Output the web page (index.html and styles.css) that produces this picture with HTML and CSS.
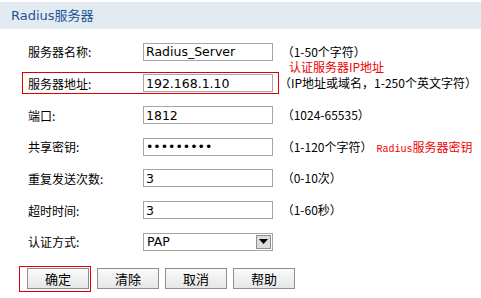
FILE: index.html
```html
<!DOCTYPE html>
<html lang="zh-CN">
<head>
    <meta charset="UTF-8">
    <title>Radius服务器</title>
    <link rel="stylesheet" href="styles.css">
</head>
<body>
<div class="panel-title">Radius服务器</div>

<div class="form">
    <div class="row first">
        <div class="field">
            <label>服务器名称:</label>
            <input type="text" value="Radius_Server">
        </div>
        <span class="hint">&nbsp;（1-50个字符）</span>
        <span class="note note-ip">认证服务器IP地址</span>
    </div>
    <div class="row">
        <div class="field mark">
            <label>服务器地址:</label>
            <input type="text" value="192.168.1.10">
        </div>
        <span class="hint">（IP地址或域名，1-250个英文字符）</span>
    </div>
    <div class="row">
        <div class="field">
            <label>端口:</label>
            <input type="text" value="1812">
        </div>
        <span class="hint">&nbsp;（1024-65535）</span>
    </div>
    <div class="row">
        <div class="field">
            <label>共享密钥:</label>
            <input type="password" value="123456789">
        </div>
        <span class="hint">&nbsp;（1-120个字符）</span>
        <span class="note note-key"><span class="mono">Radius</span>服务器密钥</span>
    </div>
    <div class="row">
        <div class="field">
            <label>重复发送次数:</label>
            <input type="text" value="3">
        </div>
        <span class="hint">&nbsp;（0-10次）</span>
    </div>
    <div class="row">
        <div class="field">
            <label>超时时间:</label>
            <input type="text" value="3">
        </div>
        <span class="hint">&nbsp;（1-60秒）</span>
    </div>
    <div class="row">
        <div class="field">
            <label>认证方式:</label>
            <div class="select">
                <span class="select-value">PAP</span>
                <span class="select-arrow">
                    <svg width="9" height="5" viewBox="0 0 9 5"><path d="M0 0h9L4.5 5z" fill="#000"/></svg>
                </span>
            </div>
        </div>
    </div>

    <div class="actions">
        <div class="btn-mark"><button>确定</button></div>
        <button>清除</button>
        <button>取消</button>
        <button>帮助</button>
    </div>
</div>
</body>
</html>
```

FILE: styles.css
```css
body {
    margin: 0;
    font-family: "DejaVu Sans", "Noto Sans CJK SC", sans-serif;
    font-size: 12px;
    color: #000;
    background: #fff;
}

.panel-title {
    margin-top: 2px;
    height: 27px;
    line-height: 27px;
    padding-left: 11px;
    background: #e3ebf2;
    color: #1d5494;
    font-size: 13px;
}

.form {
    padding-top: 7px;
}

.row {
    position: relative;
    display: flex;
    align-items: center;
    height: 31.67px;
}

.field {
    display: flex;
    align-items: center;
    margin-left: 22px;
    padding: 1px 5px;
    border: 1px solid transparent;
}

.field.mark {
    border-color: #e00000;
}

.field label {
    width: 115px;
    font-family: "Noto Sans CJK SC", sans-serif;
}

.field input {
    box-sizing: border-box;
    width: 130px;
    height: 18px;
    margin: 0;
    padding: 0 2px;
    border: 1px solid #a6a6a6;
    font-family: "DejaVu Sans", sans-serif;
    font-size: 12.5px;
    color: #000;
}

.hint {
    font-family: "Noto Sans CJK SC", sans-serif;
    line-height: 14px;
    white-space: nowrap;
}

.note {
    color: #f00000;
    font-family: "Noto Sans CJK SC", sans-serif;
    line-height: 14px;
    white-space: nowrap;
}

.note-ip {
    position: absolute;
    left: 289px;
    top: 24px;
}

.note-key {
    margin-left: 4px;
    padding-top: 4px;
}

.mono {
    font-family: "Liberation Mono", monospace;
    font-size: 10px;
}

.select {
    box-sizing: border-box;
    display: flex;
    align-items: center;
    width: 130px;
    height: 18px;
    border: 1px solid #a6a6a6;
    padding: 1px;
}

.select-value {
    flex: 1;
    padding-left: 2px;
    font-size: 12.5px;
}

.select-arrow {
    box-sizing: border-box;
    display: flex;
    align-items: center;
    justify-content: center;
    width: 15px;
    height: 14px;
    background: #dcdcdc;
    border: 1px solid #8f8f8f;
}

.actions {
    display: flex;
    align-items: center;
    gap: 6px;
    margin-top: 8px;
    margin-left: 19px;
}

.btn-mark {
    padding: 1px 1px 2px 7px;
    border: 1px solid #e00000;
}

button {
    box-sizing: border-box;
    width: 62px;
    height: 21px;
    margin: 0;
    padding: 0;
    border: 1px solid #8e8e8e;
    background: linear-gradient(#fafafa, #e6e6e6);
    font-family: "Noto Sans CJK SC", sans-serif;
    font-size: 13px;
    color: #000;
}
```
